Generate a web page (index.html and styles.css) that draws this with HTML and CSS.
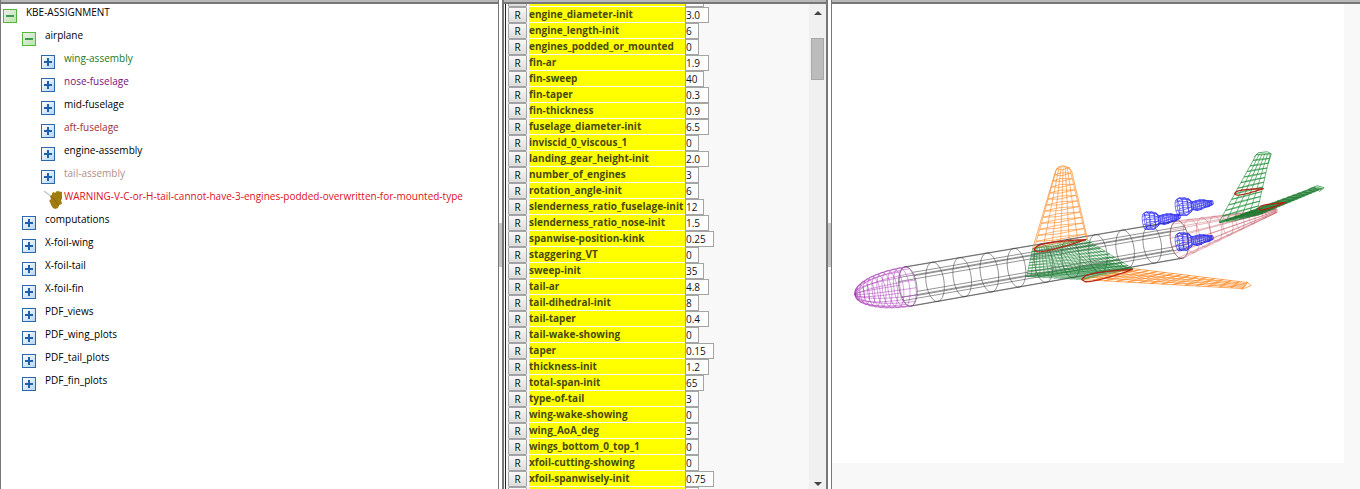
FILE: index.html
```html
<!DOCTYPE html>
<html lang="en">
<head>
<meta charset="utf-8">
<title>KBE-ASSIGNMENT</title>
<link rel="stylesheet" href="styles.css">
</head>
<body>
<main class="workspace">
  <nav class="pane tree-pane" aria-label="Object tree">
    <ul class="tree">
      <li><div class="node"><button class="toggle open" aria-label="Collapse"></button><span>KBE-ASSIGNMENT</span></div>
        <ul>
          <li><div class="node"><button class="toggle open" aria-label="Collapse"></button><span>airplane</span></div>
            <ul>
              <li><div class="node"><button class="toggle" aria-label="Expand"></button><span class="green">wing-assembly</span></div></li>
              <li><div class="node"><button class="toggle" aria-label="Expand"></button><span class="purple">nose-fuselage</span></div></li>
              <li><div class="node"><button class="toggle" aria-label="Expand"></button><span>mid-fuselage</span></div></li>
              <li><div class="node"><button class="toggle" aria-label="Expand"></button><span class="brown">aft-fuselage</span></div></li>
              <li><div class="node"><button class="toggle" aria-label="Expand"></button><span>engine-assembly</span></div></li>
              <li><div class="node"><button class="toggle" aria-label="Expand"></button><span class="rosy">tail-assembly</span></div></li>
              <li><div class="node leaf"><svg class="leaf-icon" viewBox="0 0 20 20" aria-hidden="true"><path d="M1 1l8 6" stroke="#c4c4c4" stroke-width="1.4" fill="none"/><path d="M9 3l2-1 1 1 2-2 5 1v7l-1 1 1 4-3 1-1 3-3 1-2-1-2-3-1-3-1-1 2-2-1-3 2-1z" fill="#a07c10"/><path d="M8 6l3 3 5 7" stroke="#866506" fill="none"/></svg><span class="red">WARNING-V-C-or-H-tail-cannot-have-3-engines-podded-overwritten-for-mounted-type</span></div></li>
            </ul>
          </li>
          <li><div class="node"><button class="toggle" aria-label="Expand"></button><span>computations</span></div></li>
          <li><div class="node"><button class="toggle" aria-label="Expand"></button><span>X-foil-wing</span></div></li>
          <li><div class="node"><button class="toggle" aria-label="Expand"></button><span>X-foil-tail</span></div></li>
          <li><div class="node"><button class="toggle" aria-label="Expand"></button><span>X-foil-fin</span></div></li>
          <li><div class="node"><button class="toggle" aria-label="Expand"></button><span>PDF_views</span></div></li>
          <li><div class="node"><button class="toggle" aria-label="Expand"></button><span>PDF_wing_plots</span></div></li>
          <li><div class="node"><button class="toggle" aria-label="Expand"></button><span>PDF_tail_plots</span></div></li>
          <li><div class="node"><button class="toggle" aria-label="Expand"></button><span>PDF_fin_plots</span></div></li>
        </ul>
      </li>
    </ul>
  </nav>
  <div class="splitter"><div class="grip"></div></div>
  <section class="pane inspector" aria-label="Inputs">
    <div class="scroller">
      <form class="fields">
        <div class="row"><button type="button"></button><label for="f0"></label><input id="f0" class="w2"></div>
        <div class="row"><button type="button">R</button><label for="f1">engine_diameter-init</label><input id="f1" class="w3" value="3.0"></div>
        <div class="row"><button type="button">R</button><label for="f2">engine_length-init</label><input id="f2" class="w1" value="6"></div>
        <div class="row"><button type="button">R</button><label for="f3">engines_podded_or_mounted</label><input id="f3" class="w1" value="0"></div>
        <div class="row"><button type="button">R</button><label for="f4">fin-ar</label><input id="f4" class="w3" value="1.9"></div>
        <div class="row"><button type="button">R</button><label for="f5">fin-sweep</label><input id="f5" class="w2" value="40"></div>
        <div class="row"><button type="button">R</button><label for="f6">fin-taper</label><input id="f6" class="w3" value="0.3"></div>
        <div class="row"><button type="button">R</button><label for="f7">fin-thickness</label><input id="f7" class="w3" value="0.9"></div>
        <div class="row"><button type="button">R</button><label for="f8">fuselage_diameter-init</label><input id="f8" class="w3" value="6.5"></div>
        <div class="row"><button type="button">R</button><label for="f9">inviscid_0_viscous_1</label><input id="f9" class="w1" value="0"></div>
        <div class="row"><button type="button">R</button><label for="f10">landing_gear_height-init</label><input id="f10" class="w3" value="2.0"></div>
        <div class="row"><button type="button">R</button><label for="f11">number_of_engines</label><input id="f11" class="w1" value="3"></div>
        <div class="row"><button type="button">R</button><label for="f12">rotation_angle-init</label><input id="f12" class="w1" value="6"></div>
        <div class="row"><button type="button">R</button><label for="f13">slenderness_ratio_fuselage-init</label><input id="f13" class="w2" value="12"></div>
        <div class="row"><button type="button">R</button><label for="f14">slenderness_ratio_nose-init</label><input id="f14" class="w3" value="1.5"></div>
        <div class="row"><button type="button">R</button><label for="f15">spanwise-position-kink</label><input id="f15" class="w4" value="0.25"></div>
        <div class="row"><button type="button">R</button><label for="f16">staggering_VT</label><input id="f16" class="w1" value="0"></div>
        <div class="row"><button type="button">R</button><label for="f17">sweep-init</label><input id="f17" class="w2" value="35"></div>
        <div class="row"><button type="button">R</button><label for="f18">tail-ar</label><input id="f18" class="w3" value="4.8"></div>
        <div class="row"><button type="button">R</button><label for="f19">tail-dihedral-init</label><input id="f19" class="w1" value="8"></div>
        <div class="row"><button type="button">R</button><label for="f20">tail-taper</label><input id="f20" class="w3" value="0.4"></div>
        <div class="row"><button type="button">R</button><label for="f21">tail-wake-showing</label><input id="f21" class="w1" value="0"></div>
        <div class="row"><button type="button">R</button><label for="f22">taper</label><input id="f22" class="w4" value="0.15"></div>
        <div class="row"><button type="button">R</button><label for="f23">thickness-init</label><input id="f23" class="w3" value="1.2"></div>
        <div class="row"><button type="button">R</button><label for="f24">total-span-init</label><input id="f24" class="w2" value="65"></div>
        <div class="row"><button type="button">R</button><label for="f25">type-of-tail</label><input id="f25" class="w1" value="3"></div>
        <div class="row"><button type="button">R</button><label for="f26">wing-wake-showing</label><input id="f26" class="w1" value="0"></div>
        <div class="row"><button type="button">R</button><label for="f27">wing_AoA_deg</label><input id="f27" class="w1" value="3"></div>
        <div class="row"><button type="button">R</button><label for="f28">wings_bottom_0_top_1</label><input id="f28" class="w1" value="0"></div>
        <div class="row"><button type="button">R</button><label for="f29">xfoil-cutting-showing</label><input id="f29" class="w1" value="0"></div>
        <div class="row"><button type="button">R</button><label for="f30">xfoil-spanwisely-init</label><input id="f30" class="w4" value="0.75"></div>
        <div class="row"><button type="button"></button><label for="f31"></label><input id="f31" class="w1"></div>
      </form>
      <div class="scrollbar" aria-hidden="true">
        <svg class="arrow" viewBox="0 0 8 4"><path d="M0 4L4 0l4 4z"/></svg>
        <div class="thumb"></div>
        <svg class="arrow" viewBox="0 0 8 4"><path d="M0 0h8L4 4z"/></svg>
      </div>
    </div>
  </section>
  <div class="splitter"><div class="grip"></div></div>
  <section class="pane viewer" aria-label="Model">
    <svg id="model" class="model" viewBox="832 4 513 460" role="img" aria-label="Airplane wireframe"></svg>
  </section>
</main>
<script src="model.js"></script>
</body>
</html>
```
FILE: styles.css
```css
*, *::before { box-sizing: border-box; }

body {
  margin: 0;
  font: 10px/16px "Open Sans", "Noto Sans", sans-serif;
  color: #000;
  background: #fff;
}

.workspace {
  display: grid;
  grid-template-columns: minmax(0, 498fr) 4px minmax(0, 325fr) 4px minmax(0, 529fr);
  height: 100vh;
  overflow: hidden;
}

.pane {
  display: flex;
  flex-direction: column;
  min-height: 0;
  overflow: hidden;
  border-left: 1px solid #777;
}

.pane::before {
  content: "";
  flex: none;
  height: 4px;
  margin-left: -1px;
  background: #b8b8b8;
  border-bottom: 2px solid #777;
}

.splitter {
  display: flex;
  flex-direction: column;
  justify-content: center;
  border-left: 1px solid #777;
}

.grip { height: 44px; background: #c6c6c6; }

/* Tree */
.tree, .tree ul { margin: 0; padding: 0; list-style: none; }
.tree { padding-left: 2px; }
.tree ul { padding-left: 19px; }
.node { display: flex; gap: 9px; height: 23px; white-space: nowrap; }

.toggle {
  flex: none;
  width: 14px;
  height: 14px;
  margin: 5px 0 0;
  padding: 0;
  border: 1px solid #2d68ad;
  background:
    linear-gradient(#1f5fae, #1f5fae) center / 8px 2px no-repeat,
    linear-gradient(#1f5fae, #1f5fae) center / 2px 8px no-repeat,
    linear-gradient(135deg, #fff, #b5d5f3);
}

.toggle.open {
  border-color: #55b83d;
  background:
    linear-gradient(#3c9b50, #3c9b50) center / 8px 2px no-repeat,
    linear-gradient(135deg, #eee, #b9e5a9);
}

.leaf { gap: 0; padding-left: 2px; }
.leaf-icon { flex: none; width: 20px; height: 20px; margin-top: 2px; }
.leaf span { margin-left: 1px; }

.green { color: #1b7a1b; }
.purple { color: #7c107c; }
.brown { color: #9c2f35; }
.rosy { color: #b58c8c; }
.red { color: #e0101c; }

/* Inputs */
.inspector { background: #f8f8f8; border-left-width: 2px; border-right: 1px solid #777; }
.inspector::before { margin: 0 -1px 0 -2px; }

.scroller {
  display: flex;
  flex: 1;
  min-height: 0;
  overflow: hidden;
  margin-left: 1px;
  border-left: 1px solid #222;
}

.fields { flex: 1; min-width: 0; margin-top: -13px; padding-left: 2px; }
.row { display: flex; height: 16px; }

.row button {
  flex: none;
  width: 19px;
  height: 16px;
  margin-right: 2px;
  padding: 0;
  border: 1px solid #a4a4a4;
  border-radius: 1px;
  background: linear-gradient(#f8f8f8, #dcdcdc);
  font: 10px/14px "Open Sans", sans-serif;
  color: #111;
}

.row label {
  flex: none;
  width: 156px;
  height: 15px;
  background: #ff0;
  color: #4a4a10;
  font: bold 10px/15px "Open Sans", sans-serif;
  white-space: nowrap;
}

.row input {
  height: 16px;
  padding: 0;
  border: 1px solid #a4a4a4;
  background: #fff;
  font: 10px/14px "Open Sans", sans-serif;
  color: #111;
}

.w1 { width: 14px; }
.w2 { width: 19px; }
.w3 { width: 24px; }
.w4 { width: 29px; }

.scrollbar {
  display: flex;
  flex: none;
  flex-direction: column;
  align-items: center;
  width: 17px;
  padding: 7px 0 3px;
  background: #f0f0f0;
}

.arrow { width: 8px; height: 4px; fill: #444; }
.thumb { width: 13px; height: 42px; margin: 23px 0 auto; background: #bcbcbc; border: 1px solid #a8a8a8; }

/* Model */
.viewer { background: #f8f8f8; }
.model { display: block; width: 97%; background: #fff; }
.model path { fill: none; stroke-linejoin: round; }
```
FILE: model.js
```js
const svg = document.getElementById("model");

function draw(lines, color, width, opacity) {
  const p = document.createElementNS("http://www.w3.org/2000/svg", "path");
  p.setAttribute("d", lines.map(l => "M" + l.map(q => q[0].toFixed(1) + " " + q[1].toFixed(1)).join("L")).join(""));
  p.setAttribute("stroke", color);
  p.setAttribute("stroke-width", width);
  p.setAttribute("opacity", opacity);
  svg.appendChild(p);
}

const mix = (a, b, t) => [a[0] + (b[0] - a[0]) * t, a[1] + (b[1] - a[1]) * t];

// Surface between a root chord (a-b) and a tip chord (d-c).
function surface(a, b, c, d, chordwise, spanwise, color, width, opacity, skew = 0) {
  const lines = [];
  for (let i = 0; i <= chordwise; i++) {
    const t = i / chordwise;
    lines.push([mix(a, b, t), mix(d, c, t)]);
  }
  for (let j = 0; j <= spanwise; j++) {
    const t = j / spanwise;
    const p = mix(a, d, t), q = mix(b, c, t), m = mix(p, q, 0.4);
    lines.push([p, [m[0], m[1] - skew], q]);
    if (skew) lines.push([p, [m[0], m[1] + skew], q]);
  }
  draw(lines, color, width, opacity);
}

// Body of revolution; a section is [cx, cy, rx, ry].
function body(sections, angles, color, width, opacity) {
  const tilt = -0.14;
  const at = (s, a) => {
    const x = Math.cos(a) * s[2], y = Math.sin(a) * s[3];
    return [s[0] + x * Math.cos(tilt) - y * Math.sin(tilt), s[1] + x * Math.sin(tilt) + y * Math.cos(tilt)];
  };
  const lines = sections.map(s => Array.from({ length: 33 }, (_, i) => at(s, i * Math.PI / 16)));
  angles.forEach(a => lines.push(sections.map(s => at(s, a))));
  draw(lines, color, width, opacity);
}

const around = n => Array.from({ length: n }, (_, i) => (i + 0.3) * 2 * Math.PI / n);

function foil(a, b, h) {
  const up = [], down = [];
  for (let i = 0; i <= 14; i++) {
    const t = i / 14, y = h * 3 * (Math.sqrt(t) - t), p = mix(a, b, t);
    up.push([p[0], p[1] - y]);
    down.unshift([p[0], p[1] + y]);
  }
  draw([up.concat(down)], "#b5200f", 1.3, 0.95);
}

// Centre fuselage
const mid = [];
for (let i = 0; i <= 10; i++) mid.push([908 + 27.2 * i, 287 - 4.7 * i, 9, 20 - 0.1 * i]);
const pairs = [];
around(6).forEach(a => pairs.push(a, a + 0.22));
body(mid, pairs, "#333", 0.7, 0.75);

// Nose
const nose = [];
for (let i = 0; i <= 11; i++) {
  const t = Math.pow(i / 11, 1.3), r = Math.sqrt(1 - (1 - t) * (1 - t));
  nose.push([855 + 53 * t, 295 - 8 * t, 8 * r, 20 * r]);
}
body(nose, around(16), "#a02bb0", 0.6, 0.75);

// Tail cone
const cone = [];
for (let i = 0; i <= 8; i++) {
  const t = i / 8;
  cone.push([1180 + 97 * t, 240 - 29 * t, 9 - 8 * t, 19 - 17 * t]);
}
body(cone, around(14), "#c45560", 0.6, 0.7);

// Main wings
surface([1035, 248], [1087, 240], [1070, 168], [1057, 169], 6, 13, "#ff8a26", 0.7, 0.9, 1.5);
draw([[[1033, 249], [1056, 171], [1059, 167], [1063, 166], [1067, 167], [1072, 171], [1088, 240]]], "#ff8a26", 0.8, 0.9);
surface([1082, 280], [1133, 269], [1248, 283], [1243, 289], 5, 14, "#ff8a26", 0.8, 0.95, 1);
draw([[[1247, 282], [1252, 286], [1242, 290]]], "#ff8a26", 0.8, 0.9);
surface([1027, 277], [1133, 269], [1087, 240], [1033, 249], 24, 10, "#168030", 0.6, 0.85, 1);
surface([1027, 277], [1110, 263], [1133, 269], [1082, 280], 12, 10, "#168030", 0.6, 0.7);
foil([1034, 250], [1086, 240], 5);
foil([1082, 280], [1133, 270], 5);

// Tail surfaces
surface([1220, 222], [1258, 211], [1271, 154], [1257, 155], 5, 12, "#1c8c34", 0.7, 0.9, 0.5);
draw([[[1255, 157], [1259, 153], [1268, 152], [1272, 154], [1269, 164]]], "#1c8c34", 0.8, 0.9);
surface([1220, 223], [1260, 215], [1323, 189], [1314, 188], 6, 18, "#167528", 0.7, 0.85, 1);
draw([[[1310, 189], [1318, 186], [1325, 188], [1320, 192]]], "#1c8c34", 0.8, 0.9);
foil([1235, 194], [1264, 189], 3);
foil([1259, 209], [1286, 203], 3);

// Engines
[[0, 0], [33, -14], [33, 21]].forEach(([dx, dy]) => {
  const e = [[1145, 222, 2, 8], [1148, 221, 3, 9], [1153, 221, 3, 9], [1157, 220, 2, 7], [1160, 220, 1, 4],
    [1164, 220, 1, 5], [1168, 219, 1, 5], [1172, 218, 1, 4], [1176, 218, 1, 3], [1180, 217, 1, 2]];
  body(e.map(s => [s[0] + dx, s[1] + dy, s[2], s[3]]), around(12), "#2020ef", 0.7, 0.85);
});
```
